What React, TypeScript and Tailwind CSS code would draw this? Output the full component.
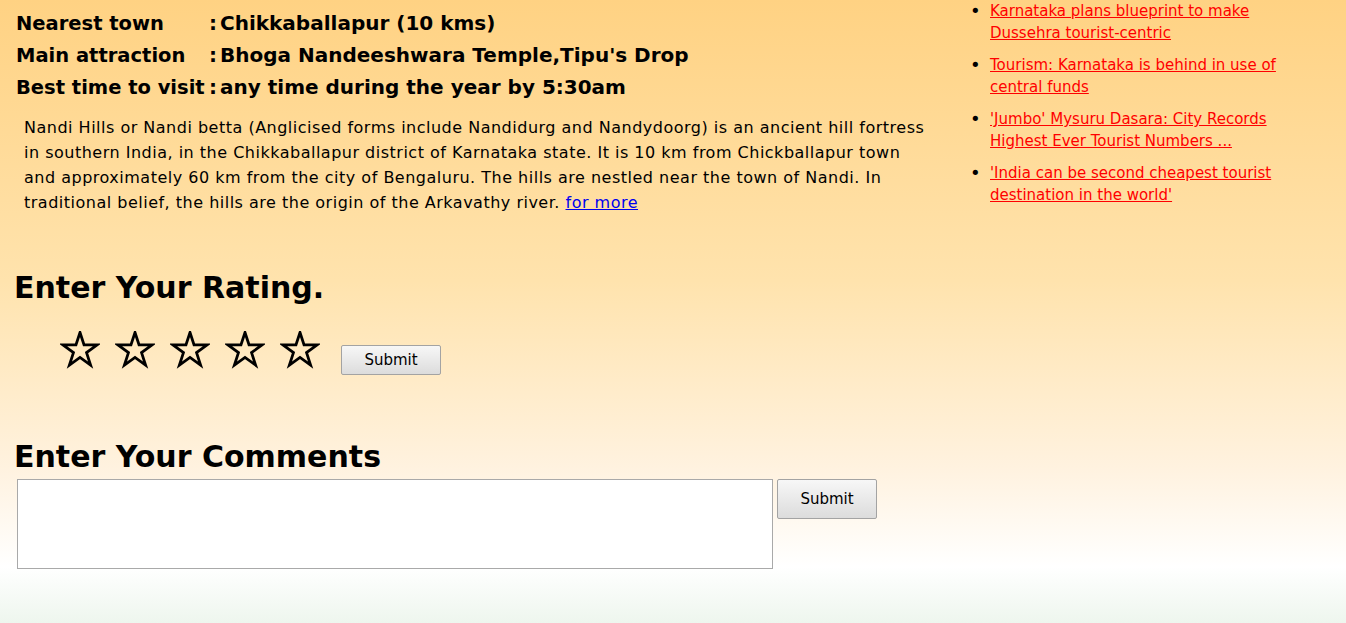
const details = [
  { label: "Altitude", value: "1478 mtrs (approx)," },
  { label: "Nearest town", value: "Chikkaballapur (10 kms)" },
  { label: "Main attraction", value: "Bhoga Nandeeshwara Temple,Tipu's Drop" },
  { label: "Best time to visit", value: "any time during the year by 5:30am" },
];

const news = [
  "Karnataka plans blueprint to make Dussehra tourist-centric",
  "Tourism: Karnataka is behind in use of central funds",
  "'Jumbo' Mysuru Dasara: City Records Highest Ever Tourist Numbers ...",
  "'India can be second cheapest tourist destination in the world'",
];

function Star() {
  return (
    <svg width="40" height="38" viewBox="0 0 40 38" className="shrink-0">
      <polygon
        points="20,1.5 24.05,13.93 37.12,13.94 26.54,21.63 30.58,34.06 20,26.38 9.42,34.06 13.46,21.63 2.88,13.94 15.95,13.93"
        fill="none"
        stroke="#000"
        strokeWidth="2.8"
        strokeLinejoin="miter"
      />
    </svg>
  );
}

export default function App() {
  return (
    <div className="min-h-[623px] overflow-hidden font-['DejaVu_Sans',sans-serif] text-black bg-[linear-gradient(180deg,#ffd283_0%,#ffe3ad_45%,#fff2df_75%,#ffffff_91%,#eef6ee_100%)]">
      <div className="flex">
        <div className="w-[945px] shrink-0 pl-4">
          <div className="-mt-[25px]">
            {details.map((d, i) => (
              <div
                key={d.label}
                className={`flex h-8 items-baseline font-bold leading-8 ${i === 0 ? "-translate-y-[3px]" : ""}`}
              >
                <span className="w-[193px] shrink-0 whitespace-nowrap text-[19.5px]">{d.label}</span>
                <span className="w-[11px] shrink-0 text-[20px]">:</span>
                <span className="whitespace-nowrap text-[20px]">{d.value}</span>
              </div>
            ))}
          </div>

          <p className="mt-3 pl-2 pr-3 text-[16px] leading-[25px] tracking-[0.5px]">
            Nandi Hills or Nandi betta (Anglicised forms include Nandidurg and Nandydoorg) is an ancient hill fortress in
            southern India, in the Chikkaballapur district of Karnataka state. It is 10 km from Chickballapur town and
            approximately 60 km from the city of Bengaluru. The hills are nestled near the town of Nandi. In traditional
            belief, the hills are the origin of the Arkavathy river.{" "}
            <a href="#" className="text-[#0000ee] underline">
              for more
            </a>
          </p>

          <h2 className="-ml-0.5 mt-[55px] text-[30px] font-bold leading-9">Enter Your Rating.</h2>

          <div className="ml-[44px] mt-[25px] flex items-start">
            <div className="flex gap-[15px]">
              <Star />
              <Star />
              <Star />
              <Star />
              <Star />
            </div>
            <button className="ml-[21px] mt-[14px] h-[30px] w-[100px] rounded-[2px] border border-[#a3a3a3] bg-[linear-gradient(180deg,#f7f7f7,#dcdcdc)] text-[15px]">
              Submit
            </button>
          </div>

          <h2 className="-ml-0.5 mt-[64px] text-[30px] font-bold leading-9">Enter Your Comments</h2>

          <div className="mt-1 flex items-start gap-1 pl-px">
            <textarea className="h-[90px] w-[756px] resize-none border border-[#a9a9a9] bg-white outline-none" />
            <button className="h-10 w-[100px] rounded-[2px] border border-[#a3a3a3] bg-[linear-gradient(180deg,#f7f7f7,#dcdcdc)] text-[15px]">
              Submit
            </button>
          </div>
        </div>

        <div className="flex-1 pr-[36px]">
          <ul className="pl-[25px] text-[15px] leading-[22px]">
            {news.map((n) => (
              <li key={n} className="mb-[10px] flex">
                <span className="w-5 shrink-0 text-[18px] leading-[22px]">•</span>
                <a href="#" className="text-[#ff0000] underline">
                  {n}
                </a>
              </li>
            ))}
          </ul>
        </div>
      </div>
    </div>
  );
}
